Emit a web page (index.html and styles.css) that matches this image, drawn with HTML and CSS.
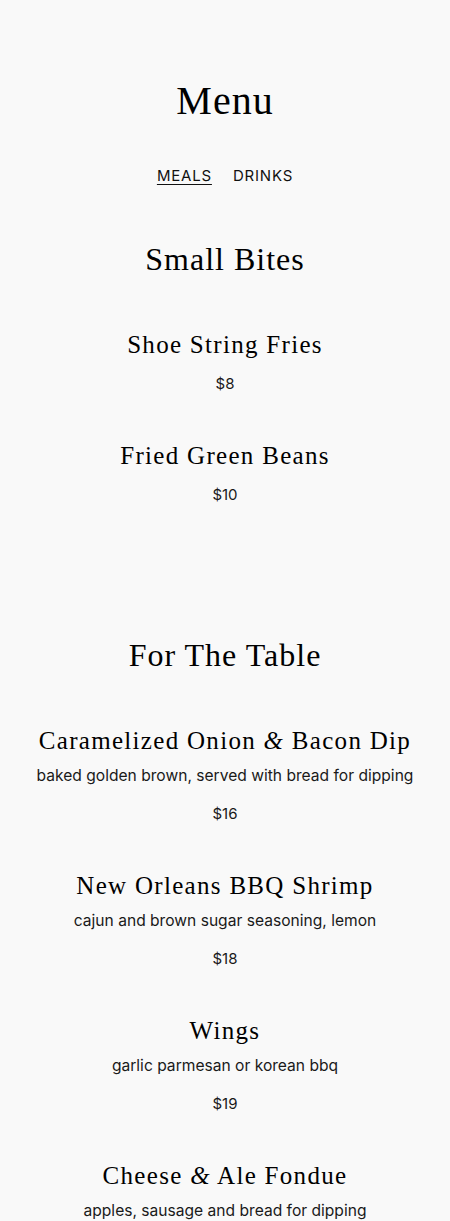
FILE: index.html
```html
<!DOCTYPE html>
<html lang="en">
<head>
    <meta charset="UTF-8">
    <meta name="viewport" content="width=device-width, initial-scale=1.0">
    <title>Menu</title>
    <link rel="stylesheet" href="styles.css">
</head>
<body>

    <div class="page">
        <h1 class="menu-title">Menu</h1>

        <nav class="menu-nav">
            <a href="#" class="active">MEALS</a>
            <a href="#">DRINKS</a>
        </nav>

        <section class="menu-section">
            <h2 class="section-title">Small Bites</h2>
            <div class="item">
                <div class="item-name">Shoe String Fries</div>
                <div class="item-price">$8</div>
            </div>
            <div class="item">
                <div class="item-name">Fried Green Beans</div>
                <div class="item-price">$10</div>
            </div>
        </section>

        <section class="menu-section">
            <h2 class="section-title">For The Table</h2>
            <div class="item">
                <div class="item-name">Caramelized Onion <span class="amp">&amp;</span> Bacon Dip</div>
                <div class="item-desc">baked golden brown, served with bread for dipping</div>
                <div class="item-price">$16</div>
            </div>
            <div class="item">
                <div class="item-name">New Orleans BBQ Shrimp</div>
                <div class="item-desc">cajun and brown sugar seasoning, lemon</div>
                <div class="item-price">$18</div>
            </div>
            <div class="item">
                <div class="item-name">Wings</div>
                <div class="item-desc">garlic parmesan or korean bbq</div>
                <div class="item-price">$19</div>
            </div>
            <div class="item">
                <div class="item-name">Cheese <span class="amp">&amp;</span> Ale Fondue</div>
                <div class="item-desc">apples, sausage and bread for dipping</div>
                <div class="item-price">$18</div>
            </div>
        </section>
    </div>

</body>
</html>
```

FILE: styles.css
```css
body {
    margin: 0;
    background-color: #f9f9f9;
    color: #111;
    font-family: Inter, "Liberation Sans", sans-serif;
}
.page {
    padding-top: 78px;
    text-align: center;
}
.menu-title {
    margin: 0 0 42px;
    font-family: "Liberation Serif", serif;
    font-weight: normal;
    font-size: 40px;
    line-height: 46px;
    letter-spacing: 1px;
    color: #000;
}
.menu-nav {
    display: flex;
    justify-content: center;
    gap: 21px;
    margin-bottom: 53px;
    line-height: 20px;
}
.menu-nav a {
    color: #111;
    text-decoration: none;
    font-size: 15px;
    letter-spacing: 0.8px;
}
.menu-nav a.active {
    text-decoration: underline;
    text-underline-offset: 3px;
}
.menu-section {
    display: flex;
    flex-direction: column;
    gap: 47px;
    margin-bottom: 130px;
}
.section-title {
    margin: 0 0 4px;
    font-family: "Liberation Serif", serif;
    font-weight: normal;
    font-size: 32px;
    line-height: 40px;
    letter-spacing: 1px;
    color: #000;
}
.item-name {
    margin-bottom: 10px;
    font-family: "Liberation Serif", serif;
    font-size: 25px;
    line-height: 30px;
    letter-spacing: 1.3px;
    color: #000;
}
.amp {
    font-style: italic;
}
.item-desc {
    margin-bottom: 18px;
    font-size: 15.6px;
    line-height: 20px;
    color: #1a1a1a;
}
.item-price {
    font-size: 15px;
    line-height: 20px;
    color: #1a1a1a;
}
.item-name + .item-price {
    margin-top: 14px;
}
```
